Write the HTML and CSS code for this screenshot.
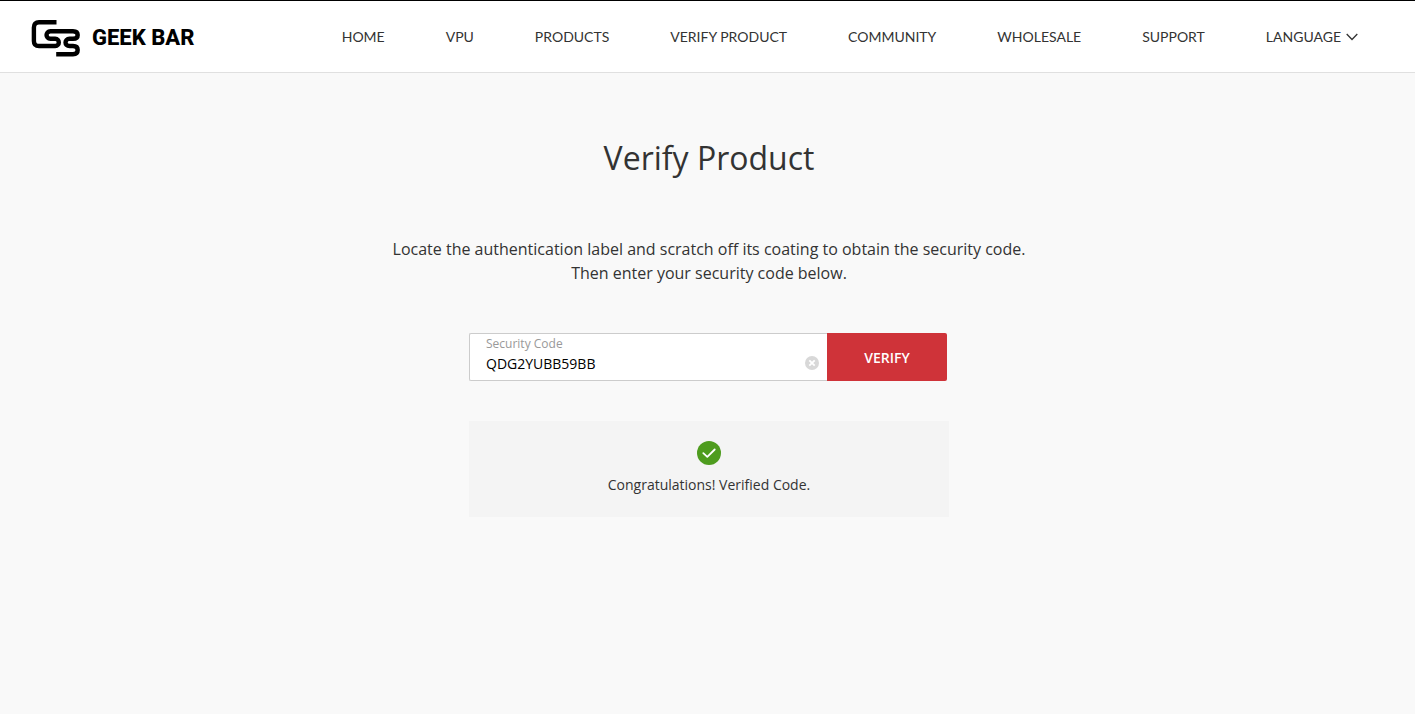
FILE: index.html
```html
<!DOCTYPE html>
<html lang="en">
<head>
<meta charset="utf-8">
<title>Verify Product - Geek Bar</title>
<link rel="stylesheet" href="styles.css">
</head>
<body>
<header class="header">
  <a class="logo" href="#">
    <svg class="logo-mark" width="50" height="37" viewBox="0 0 50 37" fill="none" stroke="#000" stroke-width="4.400" aria-hidden="true">
      <path d="M26.500 2.300H9Q3.900 2.300 3.900 7.400V20.900Q3.900 26 9 26H25.200C30 26 30 18.800 25.200 18.800H20.500C15.200 18.800 15.200 11.200 20.500 11.200H43Q47.700 11.200 47.700 15Q47.700 18.800 43 18.800H39.500C34.200 18.800 34.200 26 39.500 26H43Q47.700 26 47.700 30Q47.700 34.200 43 34.200H26.200"/>
    </svg>
    <span class="logo-text">GEEK BAR</span>
  </a>
  <nav class="nav">
    <a href="#">HOME</a>
    <a href="#">VPU</a>
    <a href="#">PRODUCTS</a>
    <a href="#">VERIFY PRODUCT</a>
    <a href="#">COMMUNITY</a>
    <a href="#">WHOLESALE</a>
    <a href="#">SUPPORT</a>
    <button class="language" type="button">LANGUAGE
      <svg width="12" height="8" viewBox="0 0 12 8" fill="none" stroke="#333" stroke-width="1.300" aria-hidden="true"><path d="M.7 1 6 6.500 11.300 1"/></svg>
    </button>
  </nav>
</header>
<main class="main">
  <h1 class="title">Verify Product</h1>
  <p class="intro">Locate the authentication label and scratch off its coating to obtain the security code.<br>Then enter your security code below.</p>
  <form class="form">
    <div class="field">
      <label class="field-label" for="code">Security Code</label>
      <div class="field-row">
        <input class="field-input" id="code" type="text" value="QDG2YUBB59BB">
        <button class="clear" type="button" aria-label="Clear">
          <svg width="14" height="14" viewBox="0 0 14 14" aria-hidden="true"><circle cx="7" cy="7" r="7" fill="#d8d8d8"/><path d="m4.300 4.300 5.400 5.400m0-5.400L4.300 9.700" stroke="#fff" stroke-width="1.800"/></svg>
        </button>
      </div>
    </div>
    <button class="verify" type="submit">VERIFY</button>
  </form>
  <section class="result">
    <svg width="24" height="24" viewBox="0 0 24 24" aria-hidden="true"><circle cx="12" cy="12" r="12" fill="#4e9c1e"/><path d="m6.300 12.200 4 3.700 7.400-7.400" fill="none" stroke="#fff" stroke-width="1.800" stroke-linecap="round" stroke-linejoin="round"/></svg>
    <p class="result-text">Congratulations! Verified Code.</p>
  </section>
</main>
</body>
</html>
```
FILE: styles.css
```css
* {
  box-sizing: border-box;
}
body {
  margin: 0;
  background: #f9f9f9;
  color: #333;
  font-family: "Open Sans", sans-serif;
}
button {
  font: inherit;
  color: inherit;
  border: 0;
  padding: 0;
  background: none;
  cursor: pointer;
}
.header {
  display: flex;
  justify-content: space-between;
  align-items: center;
  height: 73px;
  padding: 0 57px 0 30px;
  background: #fff;
  border-top: 1px solid #000;
  border-bottom: 1px solid #e0e0e0;
}
.logo {
  display: flex;
  align-items: center;
  gap: 12px;
  padding-top: 3px;
  color: #000;
  text-decoration: none;
}
.logo-mark {
  display: block;
}
.logo-text {
  font: 800 22px/36px Roboto, sans-serif;
  white-space: nowrap;
}
.nav {
  display: flex;
  align-items: center;
  gap: 61px;
  font-family: Lato, sans-serif;
  font-size: 14px;
  line-height: 24px;
  white-space: nowrap;
}
.nav a {
  color: inherit;
  text-decoration: none;
}
.language {
  display: flex;
  align-items: center;
  gap: 5px;
}
.main {
  display: flex;
  flex-direction: column;
  align-items: center;
  padding: 60px 0 40px 3px;
}
.title {
  margin: 0;
  font-size: 32px;
  font-weight: 400;
  line-height: 50px;
}
.intro {
  margin: 54px 0 0;
  font-size: 16px;
  line-height: 24px;
  text-align: center;
}
.form {
  display: flex;
  width: 100%;
  max-width: 480px;
  margin-top: 48px;
  padding-right: 2px;
}
.field {
  flex: 1;
  height: 48px;
  padding: 2px 8px 0 16px;
  background: #fff;
  border: 1px solid #ccc;
  border-right: 0;
  border-radius: 2px 0 0 2px;
}
.field-label {
  display: block;
  color: #999;
  font-size: 12px;
  line-height: 16px;
}
.field-row {
  display: flex;
  align-items: center;
}
.field-input {
  flex: 1;
  min-width: 0;
  height: 22px;
  padding: 0;
  border: 0;
  outline: 0;
  color: #000;
  background: none;
  font: inherit;
  font-size: 14px;
}
.clear svg {
  display: block;
}
.verify {
  width: 120px;
  background: #cf3339;
  color: #fff;
  border-radius: 0 2px 2px 0;
  font-size: 14px;
  font-weight: 600;
}
.result {
  display: flex;
  flex-direction: column;
  align-items: center;
  width: 100%;
  max-width: 480px;
  margin-top: 40px;
  padding: 20px 0;
  background: #f4f4f4;
}
.result-text {
  margin: 8px 0 0;
  font-size: 14px;
  line-height: 24px;
}
```
